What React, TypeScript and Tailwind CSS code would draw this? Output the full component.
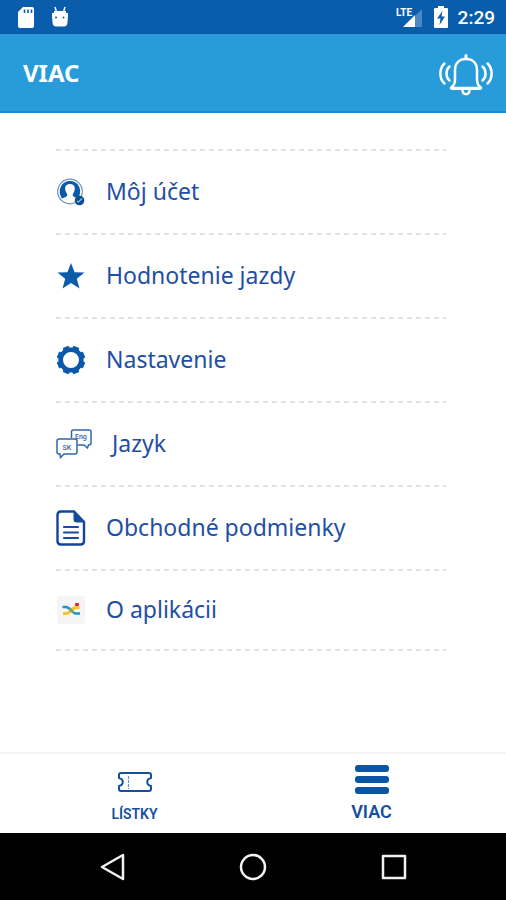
import React from 'react';

interface MenuItem {
  label: string;
  href: string;
  icon: React.ReactNode;
  wide?: boolean;
}

function AccountIcon() {
  return (
    <svg width="28" height="28" viewBox="0 0 28 28" aria-hidden="true">
      <circle cx="13" cy="13.500" r="12.300" fill="#fff" stroke="#6c8fc2" strokeWidth="1.200" />
      <path
        d="M5 20.500C0 13 4 3 13 3s13 10 8 17.500l-4.500-2c-1.200-.8-1-2 0-3.500C19 10.500 18 6 13 6s-6 4.500-3.500 9c1 1.500 1.200 2.700 0 3.500z"
        fill="#0a5aa9"
      />
      <circle cx="22.500" cy="22.500" r="4.800" fill="#0d4f97" />
      <path d="M20 23l1.500 1 3.500-3.500" fill="none" stroke="#8db8c4" strokeWidth="1.300" />
    </svg>
  );
}

function StarIcon() {
  return (
    <svg width="28" height="26" viewBox="0 0 28 26" aria-hidden="true">
      <path
        d="M14 0l3.600 9.200 9.900.4-7.700 6.200 2.700 9.600L14 20l-8.500 5.400 2.700-9.600L.5 9.600l9.900-.4z"
        fill="#0a5cab"
      />
    </svg>
  );
}

function GearIcon() {
  return (
    <svg width="30" height="30" viewBox="0 0 30 30" aria-hidden="true">
      <circle cx="15" cy="15" r="10.300" fill="none" stroke="#0a5aa9" strokeWidth="4.600" />
      <g fill="#0a5aa9">
        {[22.5, 67.5, 112.5, 157.5, 202.5, 247.5, 292.5, 337.5].map((angle) => (
          <rect key={angle} x="11.700" y="0.800" width="6.600" height="5" rx="1" transform={`rotate(${angle} 15 15)`} />
        ))}
      </g>
    </svg>
  );
}

function LanguageIcon() {
  return (
    <svg width="36" height="30" viewBox="0 0 36 30" fill="none" stroke="#2f66aa" strokeWidth="1.500" aria-hidden="true">
      <path d="M15.500 9V3q0-2 2-2H33q2 0 2 2v11q0 2-2 2h-.5l-1 3-3.500-3h-6" />
      <path d="M3 10h16q2 0 2 2v11q0 2-2 2H8l-3.500 3.500-.5-3.500H3q-2 0-2-2V12q0-2 2-2z" />
      <g fill="#2f66aa" stroke="none" fontFamily="Roboto, sans-serif" fontWeight="500">
        <text x="19" y="10" fontSize="7">Eng</text>
        <text x="6.500" y="20.500" fontSize="7">SK</text>
      </g>
    </svg>
  );
}

function DocumentIcon() {
  return (
    <svg width="30" height="36" viewBox="0 0 30 36" aria-hidden="true">
      <path
        d="M5 1.500h13L28 12v19q0 3.500-3.500 3.500H5Q1.500 34.500 1.500 31V5Q1.500 1.500 5 1.500z"
        fill="#fff"
        stroke="#12459a"
        strokeWidth="2.400"
      />
      <path d="M17.500 1.500L28.500 12.500h-8q-3 0-3-3z" fill="#12509f" />
      <path d="M8 17h14M8 22.500h14M8 28h14" stroke="#12509f" strokeWidth="2.200" strokeLinecap="round" />
    </svg>
  );
}

function AppLogo() {
  return (
    <svg width="28" height="28" viewBox="0 0 28 28" fill="none" aria-hidden="true">
      <rect width="28" height="28" rx="3" fill="#f5f5f5" />
      <path d="M6 17.500h3c4 0 6-6 10-6h3.500" stroke="#f7c621" strokeWidth="3" />
      <path d="M5.500 11H9c4 0 6 6.500 10 6.500h4" stroke="#258fc9" strokeWidth="2.500" />
      <path d="M12.500 12.500l4 4" stroke="#7da565" strokeWidth="2.500" />
      <rect x="18" y="7" width="4" height="3" rx="1" fill="#d9263d" />
    </svg>
  );
}

function BellIcon() {
  return (
    <svg width="54" height="42" viewBox="0 0 54 42" fill="none" stroke="#fff" strokeWidth="2.500" strokeLinecap="round" strokeLinejoin="round" aria-hidden="true">
      <path d="M27 1.500v3" strokeWidth="3" />
      <path d="M27 5C20 5 16 9.500 16 16v9c0 4-.5 5.500-4 9h30c-3.500-3.500-4-5-4-9v-9c0-6.500-4-11-11-11z" />
      <path d="M13 34.500h28" strokeWidth="3" />
      <path d="M23.500 36.500c.5 5 6.500 5 7 0" />
      <path d="M10.500 12.500c-4 3-4 11 0 14M43.500 12.500c4 3 4 11 0 14M5.500 9.500c-5.500 5-5.500 15 0 20M48.500 9.500c5.500 5 5.500 15 0 20" />
    </svg>
  );
}

const menuItems: MenuItem[] = [
  { label: 'Môj účet', href: '#ucet', icon: <AccountIcon /> },
  { label: 'Hodnotenie jazdy', href: '#hodnotenie', icon: <StarIcon /> },
  { label: 'Nastavenie', href: '#nastavenie', icon: <GearIcon /> },
  { label: 'Jazyk', href: '#jazyk', icon: <LanguageIcon />, wide: true },
  { label: 'Obchodné podmienky', href: '#podmienky', icon: <DocumentIcon /> },
  { label: 'O aplikácii', href: '#aplikacia', icon: <AppLogo /> },
];

function Divider() {
  return (
    <div className="h-[2px] bg-[repeating-linear-gradient(90deg,#e3e3e3_0_5px,transparent_5px_9px)]" />
  );
}

function StatusBar() {
  return (
    <div className="flex h-[34px] items-center justify-between bg-[#0a5dab] pl-[17px] pr-[11px] text-white">
      <div className="flex items-center gap-4">
        <svg width="18" height="21" viewBox="0 0 18 21" aria-hidden="true">
          <path d="M6 0h9q2 0 2 2v17q0 2-2 2H3q-2 0-2-2V5z" fill="#fff" />
          <path d="M7.500 2.500v3.500M11 2.500v3.500M14.500 2.500v3.500" stroke="#0a5dab" strokeWidth="1.600" />
        </svg>
        <svg width="18" height="21" viewBox="0 0 18 21" aria-hidden="true">
          <path d="M4 0l1.500 5M14 0l-1.500 5" stroke="#fff" strokeWidth="1.500" />
          <path d="M3 4h12v2h2v3l-.5 6q0 4.500-4 4.500h-7q-4 0-4-4.500L1 9V6h2z" fill="#fff" />
          <circle cx="5" cy="10.500" r="1" fill="#0a5dab" />
          <circle cx="12.500" cy="10.500" r="1" fill="#0a5dab" />
        </svg>
      </div>
      <div className="flex items-center gap-2.5">
        <svg width="28" height="22" viewBox="0 0 28 22" aria-hidden="true">
          <path d="M26 3v18H8z" fill="#4c88c3" />
          <path d="M19 9v12H7z" fill="#fff" />
          <text x="0" y="10" fontSize="10" fontWeight="700" fontFamily="Roboto, sans-serif" fill="#fff">LTE</text>
        </svg>
        <svg width="14" height="22" viewBox="0 0 14 22" aria-hidden="true">
          <path d="M4 0h6v2h3q1 0 1 1v18q0 1-1 1H1q-1 0-1-1V3q0-1 1-1h3z" fill="#fff" />
          <path d="M8.500 5L3 12.500h3.500L5.500 19l5.500-8.500H7.500z" fill="#0a5dab" />
        </svg>
        <span className="pt-0.5 font-[Roboto,sans-serif] text-[19px] font-medium leading-6">2:29</span>
      </div>
    </div>
  );
}

function BottomTabs() {
  return (
    <nav className="grid h-[81px] grid-cols-2 border-t-2 border-[#f4f4f4] px-4 font-[Roboto,sans-serif] font-semibold text-[#14509f]">
      <a href="#listky" className="flex flex-col items-center justify-end gap-3 pb-[11px]">
        <svg width="34" height="22" viewBox="0 0 34 22" fill="none" stroke="#14509f" strokeWidth="2" strokeLinejoin="round" aria-hidden="true">
          <path d="M3 1h28q2 0 2 2v3c-5 1-5 7 0 8v3q0 2-2 2H3q-2 0-2-2v-3c5-1 5-7 0-8V3q0-2 2-2z" />
          <path d="M10.500 4v13" stroke="#6d8fc0" strokeWidth="1.200" strokeDasharray="3 1" />
        </svg>
        <span className="text-sm leading-4">LÍSTKY</span>
      </a>
      <a href="#viac" className="flex flex-col items-center justify-end gap-2 pb-[11px]">
        <svg width="34" height="29" viewBox="0 0 34 29" fill="#0a55a4" aria-hidden="true">
          <rect width="34" height="7" rx="3" />
          <rect y="11" width="34" height="7" rx="3" />
          <rect y="22" width="34" height="7" rx="3" />
        </svg>
        <span className="text-lg leading-5">VIAC</span>
      </a>
    </nav>
  );
}

function SystemBar() {
  return (
    <div className="grid h-[67px] grid-cols-3 place-items-center bg-black px-[42px]">
      <button type="button" aria-label="Back">
        <svg width="26" height="28" viewBox="0 0 26 28" fill="none" stroke="#f2f2f2" strokeWidth="2.500" strokeLinejoin="round" aria-hidden="true">
          <path d="M24 2v24L3 14z" />
        </svg>
      </button>
      <button type="button" aria-label="Home">
        <svg width="28" height="28" viewBox="0 0 28 28" fill="none" stroke="#f2f2f2" strokeWidth="2.500" aria-hidden="true">
          <circle cx="14" cy="14" r="12" />
        </svg>
      </button>
      <button type="button" aria-label="Recent apps">
        <svg width="26" height="26" viewBox="0 0 26 26" fill="none" stroke="#f2f2f2" strokeWidth="2.500" strokeLinejoin="round" aria-hidden="true">
          <rect x="2" y="2" width="22" height="22" />
        </svg>
      </button>
    </div>
  );
}

export default function App() {
  return (
    <div className="flex min-h-screen flex-col bg-white font-['Noto_Sans',sans-serif]">
      <StatusBar />
      <header className="flex h-[79px] items-center justify-between border-b-2 border-[#1b8bcb] bg-[#289cda] pl-[23px] pr-[13px] text-white">
        <h1 className="text-2xl font-bold leading-7">VIAC</h1>
        <button type="button" aria-label="Upozornenia" className="pt-1">
          <BellIcon />
        </button>
      </header>
      <main className="flex-1 pb-6 pl-14 pr-[60px] pt-9">
        <ul>
          {menuItems.map((item) => (
            <li key={item.label} className="group">
              <Divider />
              <a
                href={item.href}
                className="flex h-[82px] items-center gap-5 text-[23px] leading-8 text-[#1f4fa3] group-last:h-[78px]"
              >
                <span className={`flex shrink-0 justify-center ${item.wide ? 'w-9' : 'w-[30px]'}`}>{item.icon}</span>
                <span className="pb-0.5">{item.label}</span>
              </a>
            </li>
          ))}
        </ul>
        <Divider />
      </main>
      <BottomTabs />
      <SystemBar />
    </div>
  );
}
